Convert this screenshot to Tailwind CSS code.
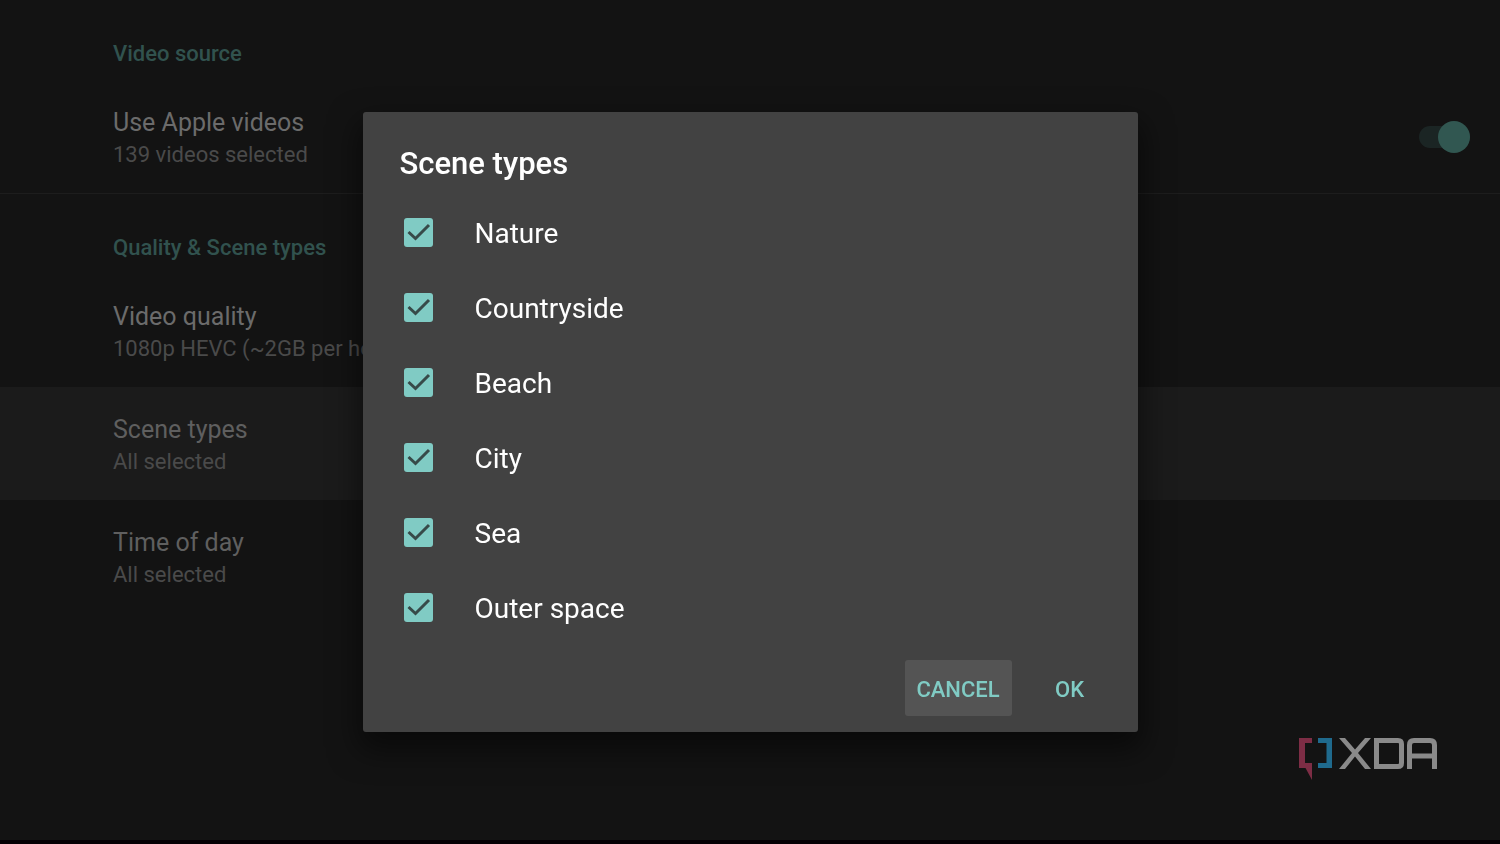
<!DOCTYPE html>
<html lang="en">
<head>
    <meta charset="UTF-8">
    <meta name="viewport" content="width=device-width, initial-scale=1.0">
    <title>Scene types</title>
    <script src="https://cdn.jsdelivr.net/npm/@tailwindcss/browser@4"></script>
</head>
<body class="bg-[#131313] font-['Roboto',sans-serif] min-h-screen flex flex-col overflow-hidden">

    <!-- Settings list -->
    <main class="grow">
        <section class="border-b border-[#1d1d1d]">
            <h2 class="pl-[113px] pt-10 pb-3 text-[22px] leading-7 font-medium text-[#31524e]">Video source</h2>
            <div class="h-[113px] pl-[113px] pr-[30px] flex items-center justify-between">
                <label for="apple-videos" class="pt-1">
                    <span class="block text-[25px] leading-8 text-[#6b6b6b]">Use Apple videos</span>
                    <span class="block text-[22px] leading-8 text-[#4a4a4a]">139 videos selected</span>
                </label>
                <span class="relative flex items-center">
                    <input id="apple-videos" type="checkbox" role="switch" checked class="appearance-none w-[51px] h-[22px] rounded-full bg-[#1b2524]">
                    <span class="absolute right-0 size-8 rounded-full bg-[#315751] pointer-events-none"></span>
                </span>
            </div>
        </section>

        <section>
            <h2 class="pl-[113px] pt-10 pb-3 text-[22px] leading-7 font-medium text-[#31524e]">Quality &amp; Scene types</h2>
            <button class="w-full h-[113px] pl-[113px] pt-1 text-left">
                <span class="block text-[25px] leading-8 text-[#6b6b6b]">Video quality</span>
                <span class="block text-[22px] leading-8 text-[#4a4a4a]">1080p HEVC (~2GB per hour)</span>
            </button>
            <button class="w-full h-[113px] pl-[113px] pt-1 text-left bg-[#1b1b1b]">
                <span class="block text-[25px] leading-8 text-[#5f5f5f]">Scene types</span>
                <span class="block text-[22px] leading-8 text-[#4a4a4a]">All selected</span>
            </button>
            <button class="w-full h-[113px] pl-[113px] pt-1 text-left">
                <span class="block text-[25px] leading-8 text-[#5f5f5f]">Time of day</span>
                <span class="block text-[22px] leading-8 text-[#4a4a4a]">All selected</span>
            </button>
        </section>
    </main>
    <div class="h-1 bg-[#040004]"></div>

    <!-- XDA logo -->
    <svg class="fixed right-[60px] bottom-16 w-[144px] h-[44px]" viewBox="0 0 144 44" fill="none" role="img" aria-label="XDA">
        <path d="M3 2H16V7H9V27H16V44L9.500 32H3Z" fill="#7d2d45"/>
        <path d="M22 2H36V32H22V27H30.500V7H22Z" fill="#1f6a8d"/>
        <path d="M43 2H49L59 13.500L69 2H75L62 17L75 33H69L59 20.500L49 33H43L56 17Z" fill="#8a8a8a"/>
        <path d="M80.500 4.500H102Q105.500 4.500 105.500 8V27Q105.500 30.500 102 30.500H80.500Z" stroke="#8a8a8a" stroke-width="5"/>
        <path d="M113.500 33V9Q113.500 4.500 118 4.500H134Q138.500 4.500 138.500 9V33M113.500 20H138.500" stroke="#8a8a8a" stroke-width="5"/>
    </svg>

    <!-- Dialog -->
    <div class="fixed inset-0 flex items-center justify-center">
        <form role="dialog" aria-labelledby="dialog-title" class="w-[775px] max-w-full rounded-[3px] bg-[#424242] shadow-[0_14px_30px_4px_rgba(0,0,0,0.5)]">
            <h1 id="dialog-title" class="px-[37px] pt-8 pb-3 text-[31px] leading-10 font-medium text-white">Scene types</h1>
            <ul class="px-[41px] text-[28px] text-white">
                <li class="h-[75px] flex items-center">
                    <label class="flex items-center gap-[42px]">
                        <span class="relative pb-0.5">
                            <input type="checkbox" checked class="block appearance-none size-[29px] rounded-[3px] bg-[#80cbc4]">
                            <svg class="absolute top-0 left-0 size-[29px] pointer-events-none" viewBox="0 0 29 29" fill="none" stroke="#374a49" stroke-width="3"><path d="M4.500 14L11.500 20.500L25 7"/></svg>
                        </span>
                        Nature
                    </label>
                </li>
                <li class="h-[75px] flex items-center">
                    <label class="flex items-center gap-[42px]">
                        <span class="relative pb-0.5">
                            <input type="checkbox" checked class="block appearance-none size-[29px] rounded-[3px] bg-[#80cbc4]">
                            <svg class="absolute top-0 left-0 size-[29px] pointer-events-none" viewBox="0 0 29 29" fill="none" stroke="#374a49" stroke-width="3"><path d="M4.500 14L11.500 20.500L25 7"/></svg>
                        </span>
                        Countryside
                    </label>
                </li>
                <li class="h-[75px] flex items-center">
                    <label class="flex items-center gap-[42px]">
                        <span class="relative pb-0.5">
                            <input type="checkbox" checked class="block appearance-none size-[29px] rounded-[3px] bg-[#80cbc4]">
                            <svg class="absolute top-0 left-0 size-[29px] pointer-events-none" viewBox="0 0 29 29" fill="none" stroke="#374a49" stroke-width="3"><path d="M4.500 14L11.500 20.500L25 7"/></svg>
                        </span>
                        Beach
                    </label>
                </li>
                <li class="h-[75px] flex items-center">
                    <label class="flex items-center gap-[42px]">
                        <span class="relative pb-0.5">
                            <input type="checkbox" checked class="block appearance-none size-[29px] rounded-[3px] bg-[#80cbc4]">
                            <svg class="absolute top-0 left-0 size-[29px] pointer-events-none" viewBox="0 0 29 29" fill="none" stroke="#374a49" stroke-width="3"><path d="M4.500 14L11.500 20.500L25 7"/></svg>
                        </span>
                        City
                    </label>
                </li>
                <li class="h-[75px] flex items-center">
                    <label class="flex items-center gap-[42px]">
                        <span class="relative pb-0.5">
                            <input type="checkbox" checked class="block appearance-none size-[29px] rounded-[3px] bg-[#80cbc4]">
                            <svg class="absolute top-0 left-0 size-[29px] pointer-events-none" viewBox="0 0 29 29" fill="none" stroke="#374a49" stroke-width="3"><path d="M4.500 14L11.500 20.500L25 7"/></svg>
                        </span>
                        Sea
                    </label>
                </li>
                <li class="h-[75px] flex items-center">
                    <label class="flex items-center gap-[42px]">
                        <span class="relative pb-0.5">
                            <input type="checkbox" checked class="block appearance-none size-[29px] rounded-[3px] bg-[#80cbc4]">
                            <svg class="absolute top-0 left-0 size-[29px] pointer-events-none" viewBox="0 0 29 29" fill="none" stroke="#374a49" stroke-width="3"><path d="M4.500 14L11.500 20.500L25 7"/></svg>
                        </span>
                        Outer space
                    </label>
                </li>
            </ul>
            <div class="flex justify-end gap-2 pt-[14px] pb-4 pr-[18px] text-[22px] font-medium text-[#80cbc4]">
                <button type="button" class="h-14 w-[107px] pt-0.5 rounded-[3px] bg-[#545454]">CANCEL</button>
                <button type="button" class="h-14 w-[100px] pt-0.5 rounded-[3px]">OK</button>
            </div>
        </form>
    </div>

</body>
</html>
